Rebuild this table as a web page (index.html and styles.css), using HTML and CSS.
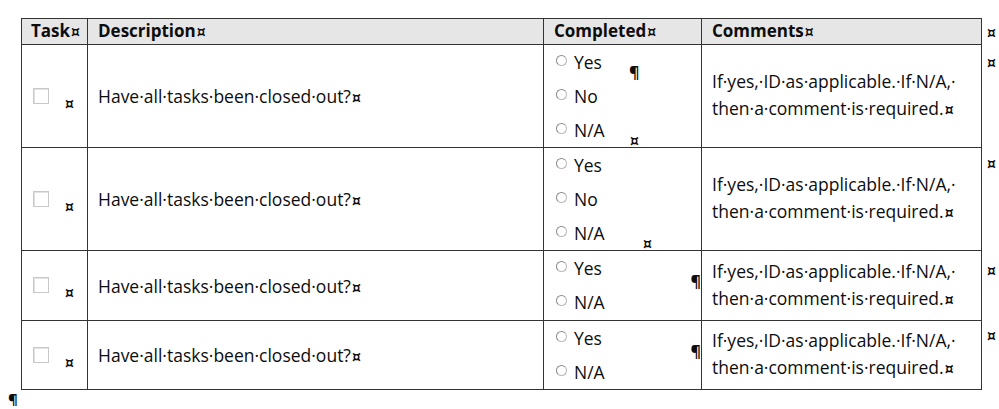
FILE: index.html
```html
<!DOCTYPE html>
<html lang="en">
<head>
<meta charset="utf-8">
<title>Checklist</title>
<link rel="stylesheet" href="styles.css">
</head>
<body>
<table class="grid">
  <colgroup>
    <col class="c-task"><col class="c-desc"><col class="c-done"><col class="c-comm"><col class="c-end">
  </colgroup>
  <thead>
    <tr class="head">
      <th>Task<span class="x">¤</span></th><th>Description<span class="x">¤</span></th><th>Completed<span class="x">¤</span></th><th>Comments<span class="x">¤</span></th><td class="end"><span class="x">¤</span></td>
    </tr>
  </thead>
  <tbody>
    <tr class="r-tall">
      <td class="task"><div class="taskbox"><span class="chk"></span><span class="x cellmark">¤</span></div></td>
      <td class="desc">Have·all·tasks·been·closed·out?<span class="x">¤</span></td>
      <td class="done">
        <div class="opts">
          <ul class="radios"><li><span class="rad"></span>Yes</li><li><span class="rad"></span>No</li><li><span class="rad"></span>N/A</li></ul>
          <div class="marks m1"><span class="pil">¶</span><span class="x cur">¤</span></div>
        </div>
      </td>
      <td class="comm">If·yes,·ID·as·applicable.·If·N/A,·<br>then·a·comment·is·required.<span class="x">¤</span></td>
      <td class="end e1"><span class="x">¤</span></td>
    </tr>
    <tr class="r-tall">
      <td class="task"><div class="taskbox"><span class="chk"></span><span class="x cellmark">¤</span></div></td>
      <td class="desc">Have·all·tasks·been·closed·out?<span class="x">¤</span></td>
      <td class="done">
        <div class="opts">
          <ul class="radios"><li><span class="rad"></span>Yes</li><li><span class="rad"></span>No</li><li><span class="rad"></span>N/A</li></ul>
          <div class="marks m2"><span class="x cur">¤</span></div>
        </div>
      </td>
      <td class="comm">If·yes,·ID·as·applicable.·If·N/A,·<br>then·a·comment·is·required.<span class="x">¤</span></td>
      <td class="end e2"><span class="x">¤</span></td>
    </tr>
    <tr class="r-short">
      <td class="task"><div class="taskbox"><span class="chk"></span><span class="x cellmark">¤</span></div></td>
      <td class="desc">Have·all·tasks·been·closed·out?<span class="x">¤</span></td>
      <td class="done">
        <div class="opts">
          <ul class="radios"><li><span class="rad"></span>Yes</li><li><span class="rad"></span>N/A</li></ul>
          <div class="marks m3"><span class="pil">¶</span></div>
        </div>
      </td>
      <td class="comm">If·yes,·ID·as·applicable.·If·N/A,·<br>then·a·comment·is·required.<span class="x">¤</span></td>
      <td class="end e3"><span class="x">¤</span></td>
    </tr>
    <tr class="r-short4">
      <td class="task"><div class="taskbox"><span class="chk"></span><span class="x cellmark">¤</span></div></td>
      <td class="desc">Have·all·tasks·been·closed·out?<span class="x">¤</span></td>
      <td class="done">
        <div class="opts">
          <ul class="radios"><li><span class="rad"></span>Yes</li><li><span class="rad"></span>N/A</li></ul>
          <div class="marks m3"><span class="pil">¶</span></div>
        </div>
      </td>
      <td class="comm">If·yes,·ID·as·applicable.·If·N/A,·<br>then·a·comment·is·required.<span class="x">¤</span></td>
      <td class="end e4"><span class="x">¤</span></td>
    </tr>
  </tbody>
</table>
<p class="tail">¶</p>
</body>
</html>
```

FILE: styles.css
```css
html, body {
  margin: 0;
  padding: 0;
  background: #ffffff;
}
body {
  font-family: "Open Sans", Lato, sans-serif;
  font-size: 17.5px;
  color: #0d0d0d;
  overflow: hidden;
}
.x {
  font-family: "DejaVu Sans", sans-serif;
  font-size: 14px;
  font-weight: 700;
  margin-left: 1px;
}
.grid {
  border-collapse: collapse;
  table-layout: fixed;
  margin: 18px 0 0 21px;
  width: 978px;
}
.c-task { width: 66px; }
.c-desc { width: 456px; }
.c-done { width: 158px; }
.c-comm { width: 280px; }
.c-end { width: 18px; }

.grid th, .grid td {
  border: 1px solid #333333;
  padding: 0 0 0 10px;
  vertical-align: middle;
  text-align: left;
}
.grid td.end {
  border: none;
  border-left: 1px solid #333333;
  padding: 0 0 0 4px;
  vertical-align: top;
  line-height: 16px;
}
.head th {
  background: #e7e6e6;
  font-weight: 700;
  font-size: 17px;
  height: 25px;
  line-height: 20px;
}
.head th:first-child { padding-left: 9px; }
.head td.end { vertical-align: middle; }

.r-tall { height: 102px; }
.r-short { height: 70px; }
.r-short4 { height: 69px; }

.taskbox {
  display: flex;
  align-items: flex-end;
  padding: 5px 0 0 1px;
}
.chk {
  width: 14px;
  height: 14px;
  border: 1px solid #c8c8c8;
  box-shadow: inset 1px 1px 0 #e2e2e2;
  margin-bottom: 6px;
}
.cellmark {
  margin-left: 16px;
  line-height: 12px;
}

.grid td.done {
  vertical-align: top;
  padding: 0 0 0 12px;
}
.opts {
  display: flex;
  height: 100%;
}
.radios {
  list-style: none;
  margin: 0;
  padding: 0;
  width: 66px;
}
.radios li {
  display: flex;
  align-items: center;
  height: 34px;
}
.rad {
  width: 11px;
  height: 11px;
  border-radius: 50%;
  border: 1px solid #b8b8b8;
  border-left-color: #8a8a8a;
  border-top-color: #8a8a8a;
  margin-right: 7px;
  margin-bottom: 3px;
  box-sizing: border-box;
}
.marks {
  display: flex;
  flex-direction: column;
  justify-content: space-between;
}
.pil { font-size: 16px; line-height: 16px; font-weight: 700; }
.m1 { height: 102px; padding-top: 19px; padding-left: 7px; box-sizing: border-box; }
.m1 .cur { line-height: 12px; }
.m2 { height: 102px; justify-content: flex-end; padding-left: 20px; }
.m2 .cur { line-height: 12px; }
.m3 { padding-top: 22px; padding-left: 69px; }

.grid td.comm { padding-left: 10px; line-height: 27px; }

.e1 { padding-top: 8px !important; }
.e2 { padding-top: 6px !important; }
.e3 { padding-top: 10px !important; }
.e4 { padding-top: 5px !important; }

.tail {
  margin: 3px 0 0 8px;
  font-weight: 700;
  font-size: 15px;
  line-height: 13px;
}
```
